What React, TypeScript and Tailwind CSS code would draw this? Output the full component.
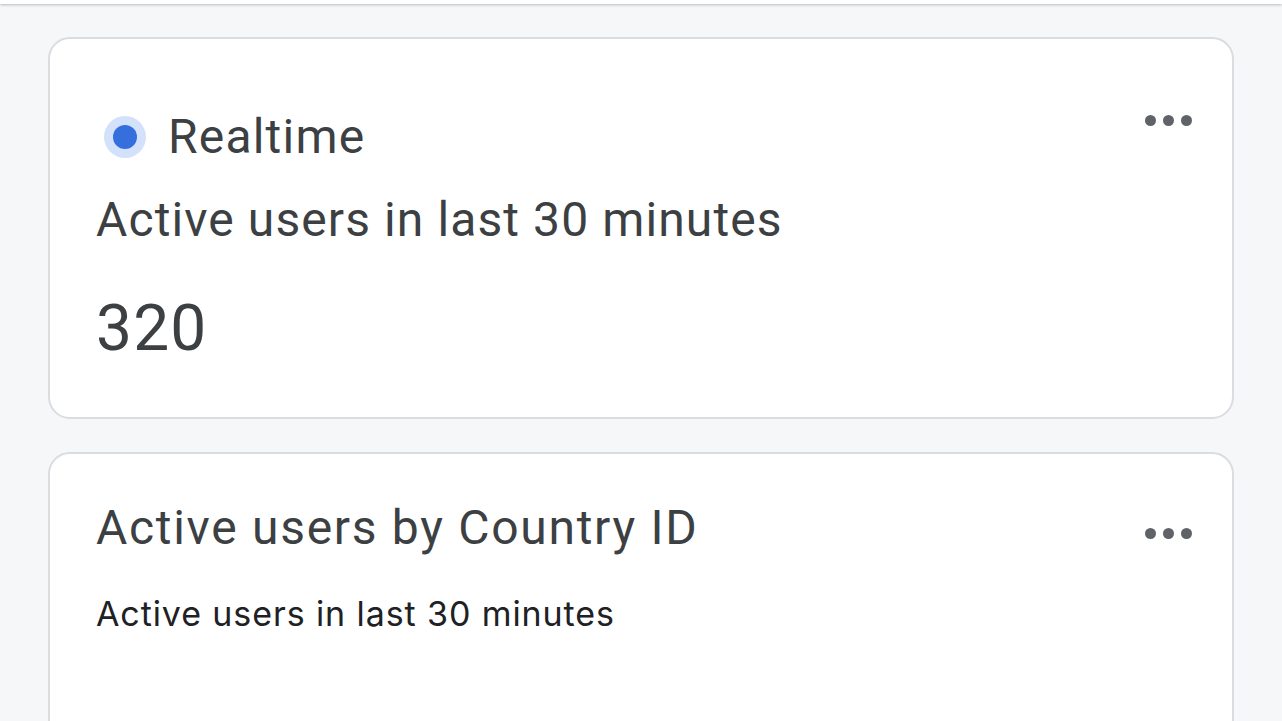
function MoreDots() {
  return (
    <button className="flex items-center gap-[7px] p-0" aria-label="More options">
      <span className="block h-[11px] w-[11px] rounded-full bg-[#5f6368]" />
      <span className="block h-[11px] w-[11px] rounded-full bg-[#5f6368]" />
      <span className="block h-[11px] w-[11px] rounded-full bg-[#5f6368]" />
    </button>
  );
}

export default function App() {
  return (
    <div
      className="min-h-screen bg-[#f6f7f9] overflow-hidden"
      style={{ fontFamily: "Roboto, 'Noto Sans', sans-serif" }}
    >
      {/* top app bar edge */}
      <div className="h-[4px] bg-white shadow-[0_1px_3px_rgba(0,0,0,0.25)]" />

      <div className="flex flex-col gap-[33px] px-[48px] pt-[33px]">
        {/* Realtime card */}
        <section className="rounded-[22px] border-2 border-[#dadce0] bg-white pl-[46px] pr-[40px] pt-[77px] pb-[50px]">
          <div className="flex items-start justify-between">
            <div className="ml-[8px] flex h-[42px] items-center gap-[22px]">
              <span className="flex h-[42px] w-[42px] items-center justify-center rounded-full bg-[#d3e1fa]">
                <span className="block h-[24px] w-[24px] rounded-full bg-[#346fdd]" />
              </span>
              <span className="text-[48px] leading-none tracking-[1.2px] text-[#3c4043]">
                Realtime
              </span>
            </div>
            <div className="-mt-[1px]">
              <MoreDots />
            </div>
          </div>
          <h2 className="mt-[34px] text-[48px] leading-[56px] tracking-[1.1px] text-[#3c4043]">
            Active users in last 30 minutes
          </h2>
          <div className="mt-[43px] text-[64px] leading-[76px] tracking-[1.2px] text-[#3c4043]">
            320
          </div>
        </section>

        {/* Country card */}
        <section className="h-[400px] rounded-[22px] border-2 border-[#dadce0] bg-white pl-[46px] pr-[40px] pt-[46px]">
          <div className="flex items-center justify-between">
            <h2 className="text-[48px] leading-[56px] tracking-[1.7px] text-[#3c4043]">
              Active users by Country ID
            </h2>
            <div className="mt-[10px]">
              <MoreDots />
            </div>
          </div>
          <p
            className="mt-[38px] text-[34px] leading-[40px] tracking-[0.9px] text-[#202124]"
            style={{ fontFamily: "Inter, Roboto, sans-serif" }}
          >
            Active users in last 30 minutes
          </p>
        </section>
      </div>
    </div>
  );
}
